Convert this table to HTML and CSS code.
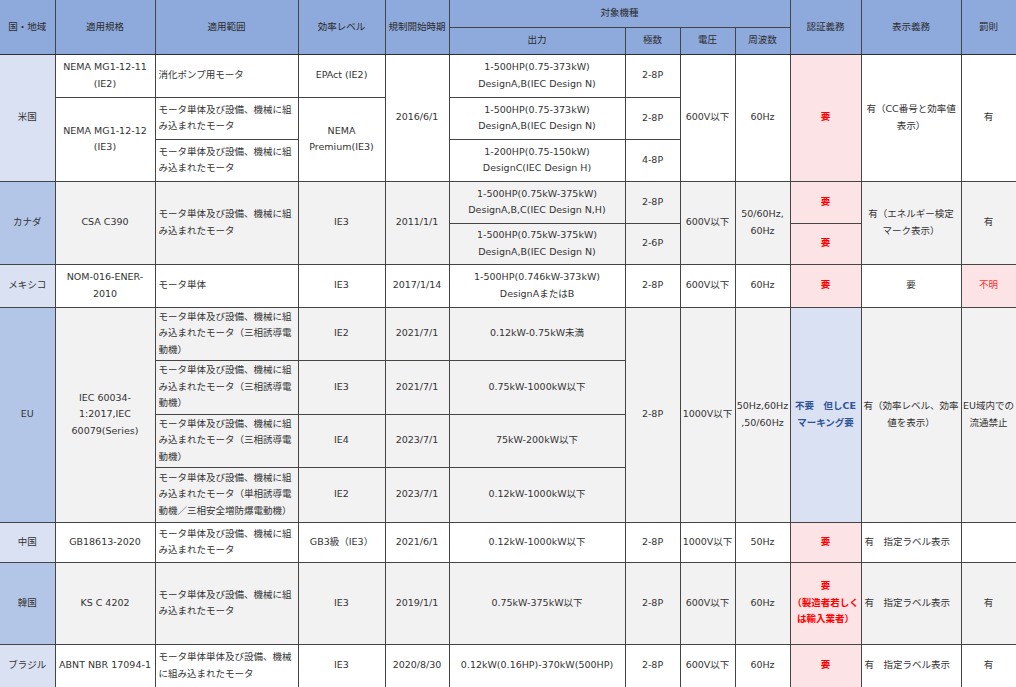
FILE: index.html
```html
<!DOCTYPE html>
<html lang="ja">
<head>
<meta charset="utf-8">
<title>モータ効率規制</title>
<link rel="stylesheet" href="styles.css">
</head>
<body>
<table class="grid">
  <colgroup>
    <col class="w55"><col class="w100"><col class="w143"><col class="w87"><col class="w64"><col class="w176">
    <col class="w55"><col class="w55"><col class="w55"><col class="w71"><col class="w100"><col class="w55">
  </colgroup>
  <thead>
    <tr class="h27">
      <th rowspan="2">国・地域</th>
      <th rowspan="2">適用規格</th>
      <th rowspan="2">適用範囲</th>
      <th rowspan="2">効率レベル</th>
      <th rowspan="2">規制開始時期</th>
      <th colspan="4">対象機種</th>
      <th rowspan="2">認証義務</th>
      <th rowspan="2">表示義務</th>
      <th rowspan="2">罰則</th>
    </tr>
    <tr class="h27">
      <th>出力</th>
      <th>極数</th>
      <th>電圧</th>
      <th>周波数</th>
    </tr>
  </thead>
  <tbody>
    <!-- 米国 -->
    <tr class="h43">
      <td rowspan="3" class="ctry">米国</td>
      <td>NEMA MG1-12-11<br>(IE2)</td>
      <td class="left">消化ポンプ用モータ</td>
      <td>EPAct (IE2)</td>
      <td rowspan="3">2016/6/1</td>
      <td>1-500HP(0.75-373kW)<br>DesignA,B(IEC Design N)</td>
      <td>2-8P</td>
      <td rowspan="3">600V以下</td>
      <td rowspan="3">60Hz</td>
      <td rowspan="3" class="req">要</td>
      <td rowspan="3">有（CC番号と効率値<br>表示）</td>
      <td rowspan="3">有</td>
    </tr>
    <tr class="h42">
      <td rowspan="2">NEMA MG1-12-12<br>(IE3)</td>
      <td class="left">モータ単体及び設備、機械に組<br>み込まれたモータ</td>
      <td rowspan="2">NEMA<br>Premium(IE3)</td>
      <td>1-500HP(0.75-373kW)<br>DesignA,B(IEC Design N)</td>
      <td>2-8P</td>
    </tr>
    <tr class="h42">
      <td class="left">モータ単体及び設備、機械に組<br>み込まれたモータ</td>
      <td>1-200HP(0.75-150kW)<br>DesignC(IEC Design H)</td>
      <td>4-8P</td>
    </tr>
    <!-- カナダ -->
    <tr class="h42 alt">
      <td rowspan="2" class="ctry dark">カナダ</td>
      <td rowspan="2">CSA C390</td>
      <td rowspan="2" class="left">モータ単体及び設備、機械に組<br>み込まれたモータ</td>
      <td rowspan="2">IE3</td>
      <td rowspan="2">2011/1/1</td>
      <td>1-500HP(0.75kW-375kW)<br>DesignA,B,C(IEC Design N,H)</td>
      <td>2-8P</td>
      <td rowspan="2">600V以下</td>
      <td rowspan="2">50/60Hz,<br>60Hz</td>
      <td class="req">要</td>
      <td rowspan="2">有（エネルギー検定<br>マーク表示）</td>
      <td rowspan="2">有</td>
    </tr>
    <tr class="h41 alt">
      <td>1-500HP(0.75kW-375kW)<br>DesignA,B(IEC Design N)</td>
      <td>2-6P</td>
      <td class="req">要</td>
    </tr>
    <!-- メキシコ -->
    <tr class="h43">
      <td class="ctry">メキシコ</td>
      <td>NOM-016-ENER-<br>2010</td>
      <td class="left">モータ単体</td>
      <td>IE3</td>
      <td>2017/1/14</td>
      <td>1-500HP(0.746kW-373kW)<br>DesignAまたはB</td>
      <td>2-8P</td>
      <td>600V以下</td>
      <td>60Hz</td>
      <td class="req">要</td>
      <td>要</td>
      <td class="unknown">不明</td>
    </tr>
    <!-- EU -->
    <tr class="h53 alt">
      <td rowspan="4" class="ctry dark">EU</td>
      <td rowspan="4">IEC 60034-<br>1:2017,IEC<br>60079(Series)</td>
      <td class="left">モータ単体及び設備、機械に組<br>み込まれたモータ（三相誘導電<br>動機）</td>
      <td>IE2</td>
      <td>2021/7/1</td>
      <td>0.12kW-0.75kW未満</td>
      <td rowspan="4">2-8P</td>
      <td rowspan="4">1000V以下</td>
      <td rowspan="4">50Hz,60Hz<br>,50/60Hz</td>
      <td rowspan="4" class="eu-cert">不要　但しCE<br>マーキング要</td>
      <td rowspan="4">有（効率レベル、効率<br>値を表示）</td>
      <td rowspan="4">EU域内での<br>流通禁止</td>
    </tr>
    <tr class="h54 alt">
      <td class="left">モータ単体及び設備、機械に組<br>み込まれたモータ（三相誘導電<br>動機）</td>
      <td>IE3</td>
      <td>2021/7/1</td>
      <td>0.75kW-1000kW以下</td>
    </tr>
    <tr class="h53 alt">
      <td class="left">モータ単体及び設備、機械に組<br>み込まれたモータ（三相誘導電<br>動機）</td>
      <td>IE4</td>
      <td>2023/7/1</td>
      <td>75kW-200kW以下</td>
    </tr>
    <tr class="h55 alt">
      <td class="left">モータ単体及び設備、機械に組<br>み込まれたモータ（単相誘導電<br>動機／三相安全増防爆電動機）</td>
      <td>IE2</td>
      <td>2023/7/1</td>
      <td>0.12kW-1000kW以下</td>
    </tr>
    <!-- 中国 -->
    <tr class="h40">
      <td class="ctry">中国</td>
      <td>GB18613-2020</td>
      <td class="left">モータ単体及び設備、機械に組<br>み込まれたモータ</td>
      <td>GB3級（IE3）</td>
      <td>2021/6/1</td>
      <td>0.12kW-1000kW以下</td>
      <td>2-8P</td>
      <td>1000V以下</td>
      <td>50Hz</td>
      <td class="req">要</td>
      <td class="left">有　指定ラベル表示</td>
      <td></td>
    </tr>
    <!-- 韓国 -->
    <tr class="h82 alt">
      <td class="ctry dark">韓国</td>
      <td>KS C 4202</td>
      <td class="left">モータ単体及び設備、機械に組<br>み込まれたモータ</td>
      <td>IE3</td>
      <td>2019/1/1</td>
      <td>0.75kW-375kW以下</td>
      <td>2-8P</td>
      <td>600V以下</td>
      <td>60Hz</td>
      <td class="req">要<br>（製造者若しく<br>は輸入業者）</td>
      <td class="left">有　指定ラベル表示</td>
      <td>有</td>
    </tr>
    <!-- ブラジル -->
    <tr class="h43">
      <td class="ctry">ブラジル</td>
      <td>ABNT NBR 17094-1</td>
      <td class="left">モータ単体単体及び設備、機械<br>に組み込まれたモータ</td>
      <td>IE3</td>
      <td>2020/8/30</td>
      <td>0.12kW(0.16HP)-370kW(500HP)</td>
      <td>2-8P</td>
      <td>600V以下</td>
      <td>60Hz</td>
      <td class="req">要</td>
      <td class="left">有　指定ラベル表示</td>
      <td>有</td>
    </tr>
  </tbody>
</table>
</body>
</html>
```

FILE: styles.css
```css
html, body {
  margin: 0;
  padding: 0;
  background: #ffffff;
}

body {
  font-family: "DejaVu Sans", "Noto Sans CJK JP", sans-serif;
  font-size: 9.5px;
  line-height: 16.5px;
  color: #333333;
}

.grid {
  width: 1016px;
  border-collapse: collapse;
  table-layout: fixed;
}

.w55 { width: 55px; }
.w64 { width: 64px; }
.w71 { width: 71px; }
.w87 { width: 87px; }
.w100 { width: 100px; }
.w143 { width: 143px; }
.w176 { width: 176px; }

.grid th,
.grid td {
  border: 1px solid #454545;
  padding: 0 1px;
  text-align: center;
  vertical-align: middle;
  white-space: nowrap;
  overflow: visible;
}

.grid th {
  background: #8ea9db;
  font-weight: normal;
  color: #2b2b2b;
}

.grid thead tr:last-child th,
.grid thead th[rowspan] {
  border-bottom: 1px solid #2e2e2e;
}

.grid tr > :first-child {
  border-left: none;
}

.grid thead tr:first-child th {
  border-top: none;
}

.h27 { height: 27px; }
.h40 { height: 40px; }
.h41 { height: 41px; }
.h42 { height: 42px; }
.h43 { height: 43px; }
.h53 { height: 53px; }
.h54 { height: 54px; }
.h55 { height: 55px; }
.h82 { height: 82px; }

.alt td {
  background: #f2f2f2;
}

.grid td.left {
  text-align: left;
  padding-left: 3px;
}

.grid td.ctry {
  background: #d9e1f2;
}

.grid td.ctry.dark {
  background: #b4c6e7;
}

.grid td.req {
  background: #fce4e6;
  color: #ff0000;
  font-weight: bold;
}

.grid td.unknown {
  background: #fce4e6;
  color: #ff3030;
}

.grid td.eu-cert {
  background: #d9e1f2;
  color: #2f5597;
  font-weight: bold;
}
```
